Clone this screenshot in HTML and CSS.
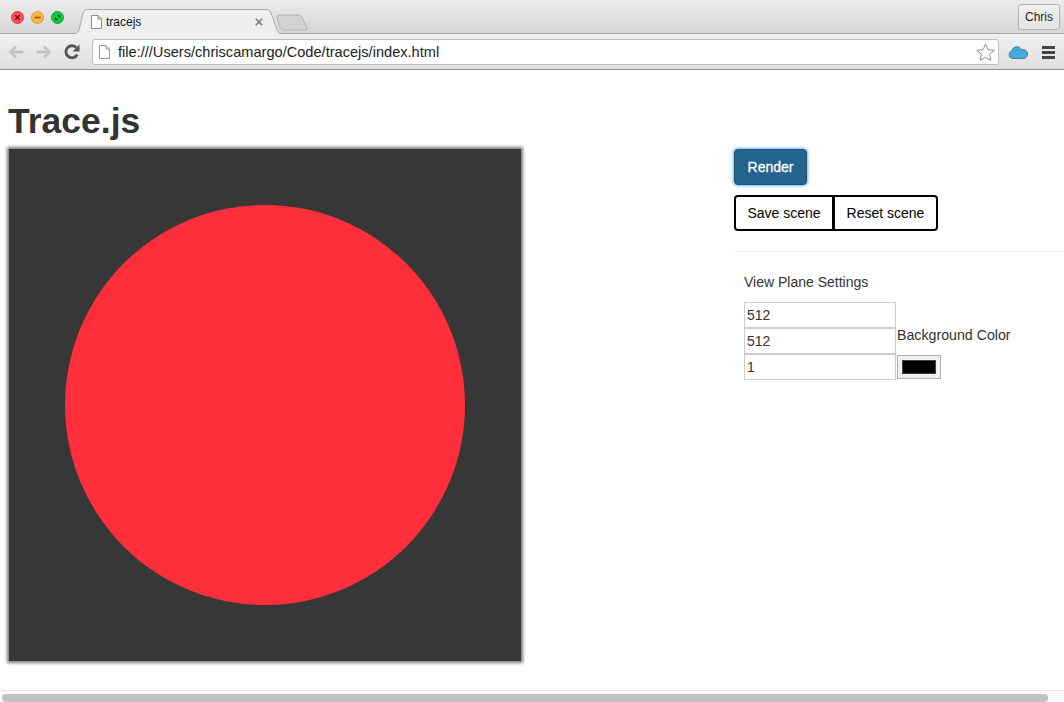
FILE: index.html
```html
<!DOCTYPE html>
<html lang="en">
<head>
    <meta charset="UTF-8">
    <title>tracejs</title>
    <link rel="stylesheet" href="styles.css">
</head>
<body>
    <div class="browser">
        <div class="tabstrip">
            <div class="lights">
                <svg width="13" height="13" viewBox="0 0 13 13"><circle cx="6.5" cy="6.5" r="6" fill="#fc4f55" stroke="#d8393f"/><path d="M4.3 4.3l4.4 4.4M8.7 4.3l-4.4 4.4" stroke="#7c1216" stroke-width="1.6"/></svg>
                <svg width="13" height="13" viewBox="0 0 13 13"><circle cx="6.5" cy="6.5" r="6" fill="#fdb443" stroke="#dc9530"/><path d="M3.4 6.5h6.2" stroke="#8f5a0c" stroke-width="1.6"/></svg>
                <svg width="13" height="13" viewBox="0 0 13 13"><circle cx="6.5" cy="6.5" r="6" fill="#17c747" stroke="#10a437"/><path d="M3.8 9.2V5.6l3.6 3.6zM9.2 3.8v3.6L5.6 3.8z" fill="#075a1e"/></svg>
            </div>
            <div class="tab">
                <svg class="tab-shape" width="210" height="25" viewBox="0 0 210 25"><path d="M-1 24.5H3c2 0 3-1 4-3.500L11 4c1-2.500 2-3.500 4-3.500H193c3 0 5 1 6 3.500l6 17c1 2.500 2 3.500 4 3.500h2V27H-1z" fill="#efefef" stroke="#a9a9a9"/></svg>
                <svg class="page-icon" width="11" height="14" viewBox="0 0 11 14"><path d="M.5.5h6.500l3.500 3.500v9.500h-10zM7 .5v3.500h3.500" fill="#fff" stroke="#8c8c8c"/></svg>
                <span class="tab-title">tracejs</span>
                <svg class="tab-close" width="8" height="8" viewBox="0 0 8 8"><path d="M.7.7l6.600 6.600M7.300.7l-6.600 6.600" stroke="#777" stroke-width="1.500"/></svg>
            </div>
            <svg class="newtab" width="32" height="17" viewBox="0 0 32 17"><path d="M2 1h20c2 0 3 1 4 2l5 10.500c.500 1.500 0 2.500-1.500 2.500H8c-2 0-3-1-4-2.500L1 3c-.500-1 0-2 1-2z" fill="#d2d2d2" stroke="#b4b4b4"/></svg>
            <div class="profile">Chris</div>
        </div>
        <div class="toolbar">
            <svg class="nav-icon" width="16" height="14" viewBox="0 0 16 14"><path d="M15.500 7H3M8 1.500L2.500 7 8 12.500" fill="none" stroke="#c4c4c4" stroke-width="2.800"/></svg>
            <svg class="nav-icon" width="16" height="14" viewBox="0 0 16 14"><path d="M.5 7H13M8 1.500L13.500 7 8 12.500" fill="none" stroke="#c4c4c4" stroke-width="2.800"/></svg>
            <svg class="nav-icon" width="16" height="16" viewBox="0 0 16 16"><path d="M13.300 10.500A6 6 0 1 1 12.200 3.500" fill="none" stroke="#555" stroke-width="2.800"/><path d="M15.500 .5v7h-7z" fill="#555"/></svg>
            <div class="omnibox">
                <svg class="page-icon" width="11" height="14" viewBox="0 0 11 14"><path d="M.5.5h6.500l3.500 3.500v9.500h-10zM7 .5v3.500h3.500" fill="#fff" stroke="#999"/></svg>
                <span class="url">file:///Users/chriscamargo/Code/tracejs/index.html</span>
                <svg class="star" width="19" height="18" viewBox="0 0 19 18"><path d="M9.500 1l2.500 5.700 6.200.6-4.700 4.100 1.400 6-5.400-3.200-5.400 3.200 1.400-6L.8 7.300 7 6.700z" fill="#fff" stroke="#8e8e8e"/></svg>
            </div>
            <svg class="cloud" width="20" height="13" viewBox="0 0 20 13"><path d="M4.500 12.500a4 4 0 0 1-.8-7.700A5.500 5.500 0 0 1 13.800 3.600a4.500 4.500 0 0 1 2.200 8.900z" fill="#45a9dc" stroke="#4a7c96"/></svg>
            <div class="menu-icon"><span></span><span></span><span></span></div>
        </div>
    </div>

    <div class="page">
        <h1>Trace.js</h1>
        <div class="workspace">
            <svg class="canvas" width="512" height="512" viewBox="0 0 512 512"><rect width="512" height="512" fill="#373737"/><circle cx="256" cy="256" r="200" fill="#ff2e3b"/></svg>
            <div class="panel">
                <button class="btn-render">Render</button>
                <div class="btn-group">
                    <button class="btn">Save scene</button>
                    <button class="btn btn-last">Reset scene</button>
                </div>
                <hr>
                <div class="settings">
                    <p class="settings-title">View Plane Settings</p>
                    <div class="settings-row">
                        <div class="inputs">
                            <input type="text" value="512">
                            <input type="text" value="512">
                            <input type="text" value="1">
                        </div>
                        <div class="color-field">
                            <label>Background Color</label>
                            <div class="color-well"><span></span></div>
                        </div>
                    </div>
                </div>
            </div>
        </div>
    </div>

    <div class="scrollbar"><div class="thumb"></div></div>
</body>
</html>
```

FILE: styles.css
```css
* {
  box-sizing: border-box;
}

html, body {
  height: 100%;
}

body {
  margin: 0;
  display: flex;
  flex-direction: column;
  overflow: hidden;
  font-family: "Liberation Sans", Arial, sans-serif;
  font-size: 14px;
  color: #333;
  background: #fff;
}

/* browser frame */
.browser {
  height: 70px;
  flex: none;
}

.tabstrip {
  height: 34px;
  display: flex;
  align-items: flex-start;
  padding: 0 4px 0 11px;
  background: linear-gradient(#ececec, #d6d6d6);
  border-bottom: 1px solid #a9a9a9;
}

.lights {
  display: flex;
  gap: 7px;
  margin-top: 11px;
}

.tab {
  position: relative;
  width: 200px;
  height: 25px;
  margin: 9px 0 0 11px;
  display: flex;
  align-items: center;
  padding: 0 0 0 16px;
}

.tab-shape {
  position: absolute;
  left: -3px;
  top: 0;
}

.tab .page-icon {
  position: relative;
}

.tab-title {
  position: relative;
  margin-left: 4px;
  font-size: 12px;
  color: #111;
}

.tab-close {
  position: absolute;
  left: 180px;
  top: 9px;
}

.newtab {
  margin: 14px 0 0 1px;
}

.profile {
  margin: 4px 0 0 auto;
  width: 42px;
  height: 26px;
  line-height: 25px;
  text-align: center;
  font-size: 12px;
  color: #222;
  border: 1px solid #b2b2b2;
  border-radius: 3px;
  background: linear-gradient(#f0f0f0, #e4e4e4);
}

.toolbar {
  height: 36px;
  display: flex;
  align-items: center;
  padding: 1px 9px 0 8px;
  background: linear-gradient(#f1f1f1, #dfdfdf);
  border-bottom: 1px solid #8f8f8f;
}

.nav-icon {
  margin-right: 12px;
}

.omnibox {
  width: 907px;
  height: 26px;
  display: flex;
  align-items: center;
  padding: 0 3px 0 6px;
  background: #fff;
  border: 1px solid #bdbdbd;
  border-radius: 3px;
}

.url {
  margin-left: 8px;
  font-size: 14.600px;
  color: #222;
}

.star {
  margin-left: auto;
}

.cloud {
  margin-left: 9px;
}

.menu-icon {
  margin-left: 14px;
  width: 13px;
  display: flex;
  flex-direction: column;
  gap: 2px;
}

.menu-icon span {
  height: 3px;
  background: #444;
}

/* page */
.page {
  flex: 1;
  min-height: 0;
  overflow: hidden;
}

h1 {
  margin: 0;
  padding: 31px 0 8px 8px;
  font-size: 35.500px;
  line-height: 40px;
  font-weight: bold;
  color: #333;
}

.workspace {
  display: flex;
  align-items: flex-start;
  padding-left: 9px;
}

.canvas {
  display: block;
  flex: none;
  box-shadow: 0 0 3px 2px #7c7c7c;
}

.panel {
  flex: 1;
  margin-left: 213px;
}

.btn-render {
  display: block;
  width: 73px;
  height: 36px;
  padding: 0;
  font: 14px "Liberation Sans", Arial, sans-serif;
  -webkit-text-stroke: 0.3px #fff;
  color: #fff;
  background: #23648f;
  border: 1px solid #1d5578;
  border-radius: 4px;
  box-shadow: 0 0 3px 1px #6db3f0;
}

.btn-group {
  display: flex;
  margin-top: 10px;
}

.btn {
  width: 100px;
  height: 36px;
  padding: 0;
  font: 14px "Liberation Sans", Arial, sans-serif;
  color: #000;
  background: #fff;
  border: 2px solid #000;
  border-radius: 4px 0 0 4px;
}

.btn-last {
  width: 105px;
  margin-left: -1px;
  border-radius: 0 4px 4px 0;
}

hr {
  margin: 20px 0 0;
  border: 0;
  border-top: 1px solid #eee;
}

.settings {
  padding: 22px 0 0 10px;
}

.settings-title {
  margin: 0 0 11px;
  line-height: 17px;
  color: #333;
}

.settings-row {
  display: flex;
  align-items: flex-end;
}

.inputs {
  display: flex;
  flex-direction: column;
  width: 152px;
}

.inputs input {
  width: 152px;
  height: 26px;
  padding: 0 2px;
  font: 14px "Liberation Sans", Arial, sans-serif;
  color: #333;
  border: 1px solid #ccc;
  border-radius: 0;
}

.color-field {
  padding-left: 1px;
  padding-bottom: 1px;
}

.color-field label {
  display: block;
  font-size: 14.200px;
  line-height: 17px;
  margin-bottom: 11px;
}

.color-well {
  width: 44px;
  height: 24px;
  padding: 4px;
  background: #efefef;
  border: 1px solid #b0b0b0;
}

.color-well span {
  display: block;
  height: 100%;
  background: #000;
  border: 1px solid #444;
}

/* horizontal scrollbar */
.scrollbar {
  flex: none;
  height: 12px;
  padding: 3px 16px 0 2px;
  background: #fafafa;
  border-top: 1px solid #e8e8e8;
}

.thumb {
  height: 8px;
  border-radius: 4px;
  background: #c1c1c1;
}
```
